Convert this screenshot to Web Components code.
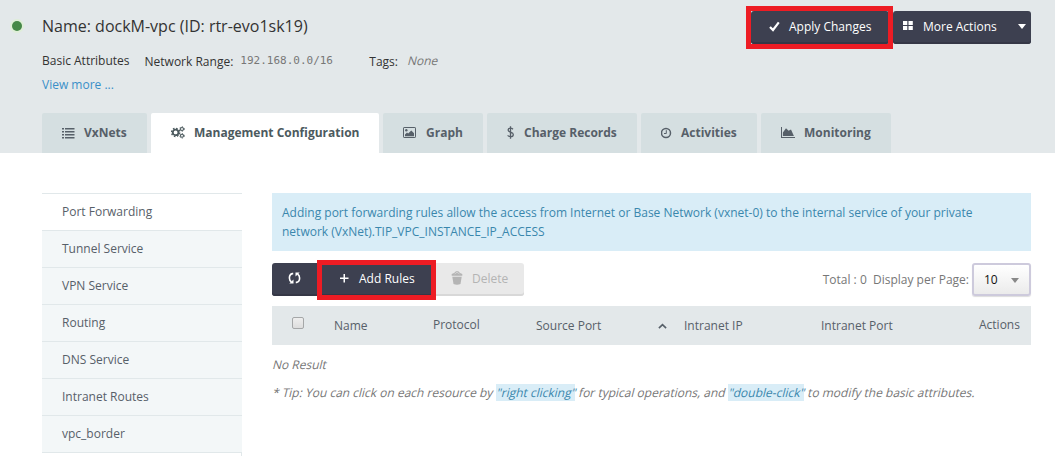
<!DOCTYPE html>
<html lang="en">
<head>
<meta charset="utf-8">
<title>dockM-vpc</title>
<style>
html,body{margin:0;height:456px;overflow:hidden;background:#fff}
body{font:12px/18px "Open Sans","Noto Sans",sans-serif;color:#576871}
</style>
</head>
<body>
<vpc-page></vpc-page>
<script>
const icons = {
  list: ['13','12','<path fill="currentColor" d="M0 1h2v1.500H0zM0 4h2v1.500H0zM0 7h2v1.500H0zM0 10h2v1.500H0zM3 1h9.500v1.500H3zM3 4h9.500v1.500H3zM3 7h9.500v1.500H3zM3 10h9.500v1.500H3z"/>'],
  cogs: ['14','13','<g fill="none" stroke="currentColor"><circle cx="4.6" cy="6.4" r="2.8" stroke-width="1.8"/><circle cx="4.6" cy="6.4" r="4.1" stroke-width="1.4" stroke-dasharray="1.6 1.62"/><circle cx="11" cy="3" r="1.5" stroke-width="1.1"/><circle cx="11" cy="3" r="2.3" stroke-width=".9" stroke-dasharray="1.1 1.3"/><circle cx="11" cy="9.8" r="1.5" stroke-width="1.1"/><circle cx="11" cy="9.8" r="2.3" stroke-width=".9" stroke-dasharray="1.1 1.3"/></g>'],
  image: ['13','11','<rect x=".5" y=".5" width="12" height="10" rx=".6" fill="none" stroke="currentColor"/><circle cx="3.3" cy="3.3" r="1.2" fill="currentColor"/><path fill="currentColor" d="M2 9.3V7.4l2-2 1.2 1.2L8.3 3.500 11 6.200v3.100z"/>'],
  dollar: ['8','13','<path d="M3.500 .3v12.400M6 3.300C5.200 2.500 4.400 2.200 3.500 2.200 2 2.200 1.100 3 1.100 4.100c0 2.600 5.200 1.500 5.200 4.400 0 1.300-1.200 2.200-2.700 2.200-1.200 0-2.200-.5-3-1.300" fill="none" stroke="currentColor" stroke-width="1.300"/>'],
  clock: ['12','12','<circle cx="5" cy="6" r="4.500" fill="none" stroke="currentColor" stroke-width="1.500"/><path d="M5.300 3.200v3.300H3" fill="none" stroke="currentColor"/>'],
  area: ['14','11','<path fill="currentColor" d="M0 0h1v10h13v1H0zM1.900 9V5.400L5 1.300l2.600 2.500L10 2.400 12.900 9z"/>'],
  check: ['11','11','<path d="M1 5.900 4 9 9.800 1.400" fill="none" stroke="currentColor" stroke-width="2.200"/>'],
  grid: ['10','9','<path fill="currentColor" d="M0 0h4.300v4H0zM5.500 0h4.300v4H5.500zM0 5h4.300v4H0zM5.500 5h4.300v4H5.500z"/>'],
  caret: ['8','5','<path fill="currentColor" d="M0 0h8L4 5z"/>'],
  plus: ['9','9','<path fill="currentColor" d="M3.500 0h1.500v3.500H8.500v1.500H5V8.500H3.500V5H0V3.500h3.500z"/>'],
  refresh: ['13','12','<path d="M5.200 1.600H4.400C2.500 2 1.400 4 1.400 6c0 1.700.8 3.200 2.100 4M7.800 10.400h.8c1.900-.4 3-2.400 3-4.400 0-1.700-.8-3.200-2.100-4" fill="none" stroke="currentColor" stroke-width="1.600"/><path fill="currentColor" d="M5.500 7.500v4H1.300zM7.500 4.500v-4h4.200z"/>'],
  trash: ['12','14','<path fill="currentColor" d="M.7 4.700V3l2.400-1L5 .3h2.300L9 2l2.300 1v1.700zM1.300 5.700h9.400L9.500 13q-3.500 1.500-7 0z"/><path d="M3.700 3.200 5 1.700h2.100l1.300 1.500" fill="none" stroke="#e9e9e9" stroke-width=".6"/>'],
  up: ['9','6','<path d="M.9 5.100 4.500 1.600l3.600 3.500" fill="none" stroke="currentColor" stroke-width="1.600"/>']
};
function define(name, html, setup){
  const t = document.createElement('template'); t.innerHTML = html;
  customElements.define(name, class extends HTMLElement{
    connectedCallback(){
      if(this.shadowRoot) return;
      this.attachShadow({mode:'open'}).append(t.content.cloneNode(true));
      if(setup) setup(this, this.shadowRoot);
    }
  });
}
define('ui-icon', '<style>:host{display:inline-flex;flex:none}svg{display:block}</style><svg></svg>', (el,root)=>{
  const [w,h,body] = icons[el.getAttribute('name')], s = root.querySelector('svg');
  s.setAttribute('width',w); s.setAttribute('height',h); s.setAttribute('viewBox',`0 0 ${w} ${h}`); s.innerHTML = body;
});
/* Slanted regular face, wider than the true italic */
define('slant-text', `<style>:host{display:inline-block;white-space:pre;transform:skewX(-14deg);transform-origin:0 13px}</style><slot></slot>`);
define('ui-button', `<style>
:host{display:flex;position:relative;box-sizing:border-box;height:33px;padding:0 0 3px;align-items:center;background:#3d4050;color:#fff;border-radius:3px;box-shadow:inset 0 -2px #353746;white-space:nowrap}
:host([disabled]){background:#e9e9e9;color:#b4b4b4;box-shadow:inset 0 -2px #d8d8d8}
:host([marked])::after{content:"";position:absolute;z-index:2;inset:var(--mark,-5px);border:5px solid #ed1c24}
::slotted(span){padding-top:2px}
</style><slot></slot>`);
define('tab-item', `<style>
:host{display:flex;box-sizing:border-box;height:40px;align-items:center;padding-left:20px;background:#d5dfe1;color:#576069;font-weight:700;border-radius:2px 2px 0 0;white-space:nowrap}
:host([active]){background:#fff;color:#4c5a5e}
i{display:flex;width:var(--i,22px);margin-top:-1px}
</style><i><slot name="icon"></slot></i><slot></slot>`);
define('side-item', `<style>
:host{display:block;flex:none;box-sizing:border-box;height:37px;padding:9px 20px 0;border-top:1px solid #e1e8ea;background:#f3f7f8;color:#576069}
:host([active]){background:#fff}
</style><slot></slot>`);
define('page-head', `<style>
:host{display:flex;flex-direction:column;box-sizing:border-box;height:153px;padding:11px 24px 0 12px;background:#e3e8ea;color:#333}
.top{display:flex;height:33px}
.dot{width:10px;height:10px;border-radius:50%;background:#468847;box-shadow:0 0 0 2px #dfeed8;margin-top:10px}
.title{font-size:16px;line-height:22px;margin:4px auto 0 20px}
.more{margin-left:4px}
.attrs{display:flex;margin:8px 0 0 30px;height:24px;white-space:nowrap}
.range{margin:1px 0 0 15px}.tags{width:28px;margin:1px 0 0 35px}
code{font:11px/18px "DejaVu Sans Mono","Liberation Mono",monospace;color:#777;width:94px;margin:0 0 0 7px}
slant-text{color:#777;margin-left:10px;height:18px}
a{color:#3a8fc8;margin-left:30px}
nav{display:flex;gap:4px;margin:auto 0 0 30px}
</style>
<div class="top"><span class="dot"></span><span class="title">Name: dockM-vpc (ID: rtr-evo1sk19)</span>
<ui-button marked style="width:138px;padding-left:18px;--mark:-5px -4px -5px -5px"><ui-icon name="check"></ui-icon><span style="margin-left:9px">Apply Changes</span></ui-button>
<ui-button class="more" style="width:138px;padding-left:10px"><ui-icon name="grid" style="margin-top:-1px"></ui-icon><span style="margin-left:10px;width:95px">More Actions</span><ui-icon name="caret"></ui-icon></ui-button></div>
<div class="attrs"><span>Basic Attributes</span><span class="range">Network Range:</span><code>192.168.0.0/16</code><span class="tags">Tags:</span><slant-text>None</slant-text></div>
<a>View more ...</a>
<nav>
<tab-item style="width:105px"><ui-icon slot="icon" name="list"></ui-icon>VxNets</tab-item>
<tab-item active style="width:228px;--i:23px"><ui-icon slot="icon" name="cogs"></ui-icon>Management Configuration</tab-item>
<tab-item style="width:100px;--i:23px"><ui-icon slot="icon" name="image"></ui-icon>Graph</tab-item>
<tab-item style="width:150px;--i:17px"><ui-icon slot="icon" name="dollar"></ui-icon>Charge Records</tab-item>
<tab-item style="width:116px;--i:20px"><ui-icon slot="icon" name="clock"></ui-icon>Activities</tab-item>
<tab-item style="width:130px;--i:23px"><ui-icon slot="icon" name="area"></ui-icon>Monitoring</tab-item>
</nav>`);
define('side-menu', `<style>:host{display:flex;flex-direction:column;width:200px;height:263px;box-sizing:border-box}.end{flex:1;box-sizing:border-box;border-top:1px solid #e1e8ea;border-right:1px solid #e1e8ea}</style>
<side-item active>Port Forwarding</side-item><side-item>Tunnel Service</side-item><side-item>VPN Service</side-item><side-item>Routing</side-item><side-item>DNS Service</side-item><side-item>Intranet Routes</side-item><side-item>vpc_border</side-item><div class="end"></div>`);
define('info-note', `<style>:host{display:block;box-sizing:border-box;height:58px;padding:10px;background:#d9edf7;color:#3a87ad;line-height:19px;white-space:nowrap}</style><slot></slot>`);
define('page-size', `<style>:host{display:flex;box-sizing:border-box;width:59px;height:33px;border:2px solid #cdcadc;border-radius:3px;background:linear-gradient(#fff,#ebebeb);box-shadow:0 1px 1px #ddd;align-items:center;padding:0 10px;color:#111}ui-icon{margin:2px 0 0 auto;color:#888}</style><span>10</span><ui-icon name="caret"></ui-icon>`);
define('tool-bar', `<style>:host{display:flex;height:33px;margin-top:12px}.total{margin:8px 3px 0 auto;color:#777;white-space:pre}</style>
<ui-button style="width:45px;padding-left:16px;border-radius:3px 0 0 3px"><ui-icon name="refresh"></ui-icon></ui-button>
<ui-button marked style="width:119px;padding-left:23px;border-radius:0;--mark:-3px 0 -4px"><ui-icon name="plus"></ui-icon><span style="margin-left:10px">Add Rules</span></ui-button>
<ui-button disabled style="width:88px;padding-left:15px;border-radius:0 3px 3px 0"><ui-icon name="trash"></ui-icon><span style="margin-left:9px">Delete</span></ui-button>
<span class="total">Total : 0  Display per Page:</span><page-size></page-size>`);
define('table-head', `<style>
:host{display:grid;grid-template-columns:62px 99px 103px 122px 26px 137px 158px 1fr;box-sizing:border-box;height:39px;margin-top:10px;background:#e3e8ea;color:#576069;padding-top:11px;white-space:nowrap}
.u{margin-top:-1px}ui-icon{margin:6px 0 0}
.box{box-sizing:border-box;width:12px;height:12px;margin:0 0 0 20px;border:1px solid #a5a7a8;border-radius:2px;background:linear-gradient(#eee,#ddd)}
</style><span class="box"></span><span>Name</span><span class="u">Protocol</span><span>Source Port</span><ui-icon name="up"></ui-icon><span>Intranet IP</span><span>Intranet Port</span><span class="u">Actions</span>`);
define('vpc-page', `<style>
:host{display:block}.body{display:flex;padding:40px 24px 0 42px;gap:30px}main{flex:1;min-width:0}
p{margin:0;color:#777;white-space:nowrap;height:18px}.tip{margin-top:10px}
mark{background:#d9edf7;color:#3a87ad}
</style><page-head></page-head><div class="body"><side-menu></side-menu><main>
<info-note>Adding port forwarding rules allow the access from Internet or Base Network (vxnet-0) to the internal service of your private<br>network (VxNet).TIP_VPC_INSTANCE_IP_ACCESS</info-note>
<tool-bar></tool-bar><table-head></table-head>
<p style="margin-top:11px"><slant-text>No Result</slant-text></p>
<p class="tip"><slant-text>* Tip: You can click on each resource by </slant-text><mark><slant-text>"right clicking"</slant-text></mark><slant-text> for typical operations, and </slant-text><mark><slant-text>"double-click"</slant-text></mark><slant-text> to modify the basic attributes.</slant-text></p>
</main></div>`);
</script>
</body>
</html>
